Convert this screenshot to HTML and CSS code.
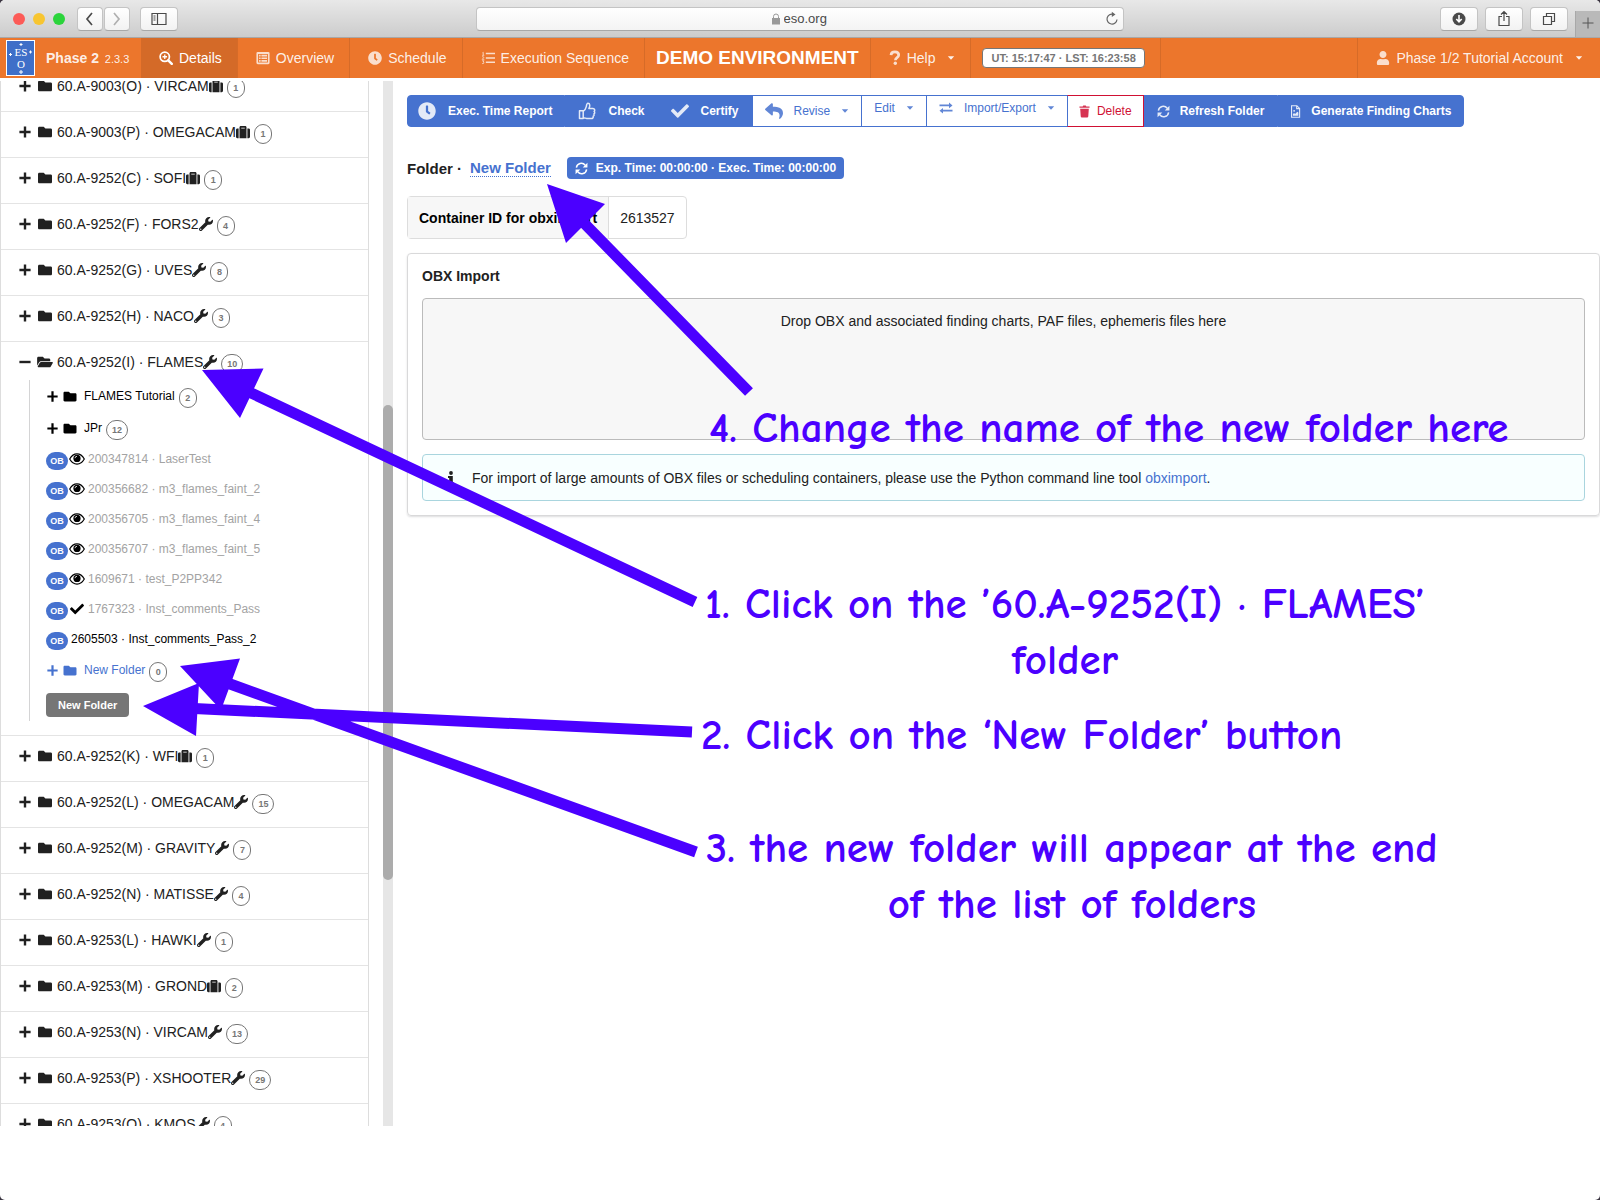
FILE: index.html
```html
<!DOCTYPE html>
<html lang="en">
<head>
    <meta charset="UTF-8">
    <meta name="viewport" content="width=device-width, initial-scale=1.0">
    <title>Phase 2</title>
    <link rel="stylesheet" href="styles.css">
</head>
<body>

    <!-- Icon set -->
    <svg class="sprite" aria-hidden="true">
        <symbol id="plus" viewBox="0 0 12 12"><path d="M4.8 0.4h2.4v4.4h4.4v2.4H7.2v4.4H4.8V7.2H0.4V4.8h4.4z"/></symbol>
        <symbol id="minus" viewBox="0 0 12 12"><path d="M0.4 4.8h11.2v2.4H0.4z"/></symbol>
        <symbol id="folder" viewBox="0 0 512 512"><path d="M464 128H272l-64-64H48C21.49 64 0 85.49 0 112v288c0 26.51 21.49 48 48 48h416c26.51 0 48-21.49 48-48V176c0-26.51-21.49-48-48-48z"/></symbol>
        <symbol id="folder-open" viewBox="0 0 576 512"><path d="M572.694 292.093L500.27 416.248A63.997 63.997 0 0 1 444.989 448H45.025c-18.523 0-30.064-20.093-20.731-36.093l72.424-124.155A64 64 0 0 1 152 256h399.964c18.523 0 30.064 20.093 20.73 36.093zM152 224h328v-48c0-26.51-21.49-48-48-48H272l-64-64H48C21.49 64 0 85.49 0 112v278.046l69.077-118.418C86.214 242.25 117.989 224 152 224z"/></symbol>
        <symbol id="wrench" viewBox="0 0 512 512"><path d="M507.73 109.1c-2.24-9.03-13.54-12.09-20.12-5.51l-74.36 74.36-67.88-11.31-11.31-67.88 74.36-74.36c6.62-6.62 3.43-17.9-5.66-20.16-47.38-11.74-99.55.91-136.58 37.93-39.64 39.64-50.55 97.1-34.05 147.2L18.74 402.76c-24.99 24.99-24.99 65.51 0 90.5 24.99 24.99 65.51 24.99 90.5 0l213.21-213.21c50.12 16.71 107.47 5.68 147.37-34.22 37.07-37.07 49.7-89.32 37.91-136.73zM64 472c-13.25 0-24-10.75-24-24 0-13.26 10.75-24 24-24s24 10.74 24 24c0 13.25-10.75 24-24 24z"/></symbol>
        <symbol id="suitcase" viewBox="0 0 512 512"><path d="M128 480h256V80c0-26.5-21.5-48-48-48H176c-26.5 0-48 21.5-48 48v400zm64-384h128v32H192V96zm320 80v256c0 26.5-21.5 48-48 48h-48V128h48c26.5 0 48 21.5 48 48zM96 480H48c-26.5 0-48-21.5-48-48V176c0-26.5 21.5-48 48-48h48v352z"/></symbol>
        <symbol id="check" viewBox="0 0 512 512"><path d="M173.898 439.404l-166.4-166.4c-9.997-9.997-9.997-26.206 0-36.204l36.203-36.204c9.997-9.998 26.207-9.998 36.204 0L192 312.69 432.095 72.596c9.997-9.997 26.207-9.997 36.204 0l36.203 36.204c9.997 9.997 9.997 26.206 0 36.204l-294.4 294.401c-9.998 9.997-26.207 9.997-36.204-.001z"/></symbol>
        <symbol id="clock" viewBox="0 0 512 512"><path d="M256,8C119,8,8,119,8,256S119,504,256,504,504,393,504,256,393,8,256,8Zm92.49,313h0l-20,25a16,16,0,0,1-22.49,2.5h0l-67-49.72a40,40,0,0,1-15-31.23V112a16,16,0,0,1,16-16h32a16,16,0,0,1,16,16V256l58,42.5A16,16,0,0,1,348.49,321Z"/></symbol>
        <symbol id="user" viewBox="0 0 448 512"><path d="M224 256c70.7 0 128-57.3 128-128S294.7 0 224 0 96 57.3 96 128s57.3 128 128 128zm89.6 32h-16.7c-22.2 10.2-46.9 16-72.9 16s-50.6-5.8-72.9-16h-16.7C60.2 288 0 348.2 0 422.4V464c0 26.5 21.5 48 48 48h352c26.5 0 48-21.5 48-48v-41.6c0-74.2-60.2-134.4-134.4-134.4z"/></symbol>
        <symbol id="reply" viewBox="0 0 512 512"><path d="M8.309 189.836L184.313 37.851C199.719 24.546 224 35.347 224 56.015v80.053c160.629 1.839 288 34.032 288 186.258 0 61.441-39.581 122.309-83.333 154.132-13.653 9.931-33.111-2.533-28.077-18.631 45.344-145.012-21.507-183.51-176.59-185.742V360c0 20.7-24.3 31.453-39.687 18.164l-176.004-152c-11.071-9.562-11.086-26.753 0-36.328z"/></symbol>
        <symbol id="caret" viewBox="0 0 8 8"><path d="M0.8 2.2h6.4L4 5.8z"/></symbol>
        <symbol id="eye" viewBox="0 0 16 14"><path d="M0.7 7C2.7 3.4 5.2 1.9 8 1.9S13.3 3.4 15.3 7C13.3 10.6 10.8 12.1 8 12.1S2.7 10.6 0.7 7z" fill="none" stroke="currentColor" stroke-width="1.2"/><circle cx="8" cy="6.4" r="3.6"/><path d="M6 6.2A2 2 0 0 1 8 4.3" fill="none" stroke="#fff" stroke-width="0.8"/></symbol>
        <symbol id="zoom-in" viewBox="0 0 16 16"><g fill="none" stroke="currentColor"><circle cx="6.6" cy="6.6" r="5.3" stroke-width="2"/><path d="M10.6 10.6l4 4" stroke-width="2.8" stroke-linecap="round"/><path d="M6.6 4v5.2M4 6.6h5.2" stroke-width="1.5"/></g></symbol>
        <symbol id="list-alt" viewBox="0 0 16 16"><path fill-rule="evenodd" d="M2 1h12a1.5 1.5 0 0 1 1.5 1.5v11A1.5 1.5 0 0 1 14 15H2a1.5 1.5 0 0 1-1.5-1.5v-11A1.5 1.5 0 0 1 2 1zM2.4 3.4v9.8h11.2V3.4z"/><path d="M3.5 4.4h1.8v1.8H3.5zM6.2 4.4h6.4v1.8H6.2zM3.5 7.4h1.8v1.8H3.5zM6.2 7.4h6.4v1.8H6.2zM3.5 10.4h1.8v1.8H3.5zM6.2 10.4h6.4v1.8H6.2z"/></symbol>
        <symbol id="list-ol" viewBox="0 0 16 16"><path d="M5.5 2H16v1.8H5.5zM5.5 7H16v1.8H5.5zM5.5 12H16v1.8H5.5z"/><path d="M1.6 2.2l1-0.7v3.3M1.2 4.9h2.6M1.2 6.7c1.7-0.9 2.7 0.5 1.3 1.6L1.3 9.5h2.5M1.2 11.2h2.3l-1.2 1.4c1.9 0.2 1.5 2.3-1.2 1.7" fill="none" stroke="currentColor" stroke-width="0.9"/></symbol>
        <symbol id="help" viewBox="0 0 12 16"><path d="M2 5.2C2.3 0.8 9.7 1 9.7 5.1c0 2.7-3.3 2.5-3.3 5.1" fill="none" stroke="currentColor" stroke-width="2.7"/><circle cx="6.3" cy="13.3" r="1.7"/></symbol>
        <symbol id="thumb" viewBox="0 0 18 18"><path d="M1.5 8.7h3.7v7.9H1.5zM5.2 9.3c1.9-1 2.6-2.6 3.1-4.7 0.3-1.8 0.5-3.3 1.6-3.3 2.4 0 2.2 2.8 1 5.3h4c2 0 2.3 1.9 1.2 2.7 0.9 1 0.7 2.2-0.2 2.7 0.5 1 0.2 1.9-0.7 2.3 0.2 1.4-0.4 2.3-2 2.3H9.8c-1.8 0-3-0.9-4.6-0.9" fill="none" stroke="currentColor" stroke-width="1.5" stroke-linejoin="round"/></symbol>
        <symbol id="exchange" viewBox="0 0 14 12"><path d="M0.5 2.6H10V0.5l3.5 2.9L10 6.2V4.2H0.5zM13.5 9.4H4v2L0.5 8.7 4 5.9v1.9h9.5z"/></symbol>
        <symbol id="trash" viewBox="0 0 12 14"><path d="M0.5 1.5H4l0.7-1h2.6l0.7 1h3.5V3h-11zM1.3 4h9.4l-0.6 8.5a1.2 1.2 0 0 1-1.2 1H3.1a1.2 1.2 0 0 1-1.2-1z"/></symbol>
        <symbol id="refresh" viewBox="0 0 14 14"><path d="M1.5 6.1A5.3 5.3 0 0 1 11 3.5M12.5 7.9A5.3 5.3 0 0 1 3 10.5" fill="none" stroke="currentColor" stroke-width="1.6"/><path d="M13.4 0.7v5.1H8.3zM0.6 13.3V8.2h5.1z"/></symbol>
        <symbol id="file-image" viewBox="0 0 12 14"><path d="M1.7 0.7h5.8l3 3v9.6H1.7zM7.3 0.8v3.1h3.1" fill="none" stroke="currentColor" stroke-width="1.2"/><path d="M3.2 11.5V9.8l1.3-1.2 1 1L8 7.2l1.1 1v3.3z"/><circle cx="4.5" cy="6.3" r="1"/></symbol>
        <symbol id="info" viewBox="0 0 8 16"><path d="M1 6h4.8v6.4H7v2H1v-2h1.2V8H1z"/><circle cx="4" cy="3" r="1.9"/></symbol>
        <symbol id="lock" viewBox="0 0 10 12"><path d="M1 5h8v6.5H1z"/><path d="M2.5 5V3.5a2.5 2.5 0 0 1 5 0V5" fill="none" stroke="currentColor"/></symbol>
    </svg>

    <div class="window">

        <!-- Browser bar -->
        <header class="browser">
            <div class="chrome-left">
                <div class="lights">
                    <span class="light red"></span>
                    <span class="light yellow"></span>
                    <span class="light green"></span>
                </div>
                <div class="history">
                    <button class="chrome-btn small" aria-label="Back"><svg width="14" height="16" viewBox="0 0 14 16"><path d="M9 2L4 8l5 6" fill="none" stroke="#4a4a4a" stroke-width="1.7"/></svg></button>
                    <button class="chrome-btn small" aria-label="Forward"><svg width="14" height="16" viewBox="0 0 14 16"><path d="M4 2l5 6-5 6" fill="none" stroke="#b0b0b0" stroke-width="1.7"/></svg></button>
                </div>
                <button class="chrome-btn" aria-label="Show sidebar"><svg width="16" height="14" viewBox="0 0 16 14"><path d="M1 1.5h14v11H1zM6.5 1.5v11M2.5 4h2M2.5 6h2M2.5 8h2" fill="none" stroke="#4a4a4a" stroke-width="1.2"/></svg></button>
            </div>
            <div class="address">
                <svg class="lock" width="10" height="12"><use href="#lock"/></svg>
                <input class="url" type="text" value="eso.org" aria-label="Address">
                <button class="reload" aria-label="Reload"><svg width="14" height="16" viewBox="0 0 14 16"><path d="M8.5 3.3A5 5 0 1 0 12 8.5" fill="none" stroke="#666" stroke-width="1.2"/><path d="M6.8 0.7l3.7 2.7-3.7 2.5z" fill="#666"/></svg></button>
            </div>
            <div class="chrome-right">
                <button class="chrome-btn" aria-label="Downloads"><svg width="14" height="14" viewBox="0 0 14 14"><circle cx="7" cy="7" r="6.5" fill="#4a4a4a"/><path d="M7 3v6.5M4.3 7L7 9.8 9.7 7" fill="none" stroke="#fff" stroke-width="1.6"/></svg></button>
                <button class="chrome-btn" aria-label="Share"><svg width="14" height="18" viewBox="0 0 14 18"><path d="M5 6.5H2v9h10v-9H9M7 11V2M4 4.5L7 1.5l3 3" fill="none" stroke="#4a4a4a" stroke-width="1.2"/></svg></button>
                <button class="chrome-btn" aria-label="Show tabs"><svg width="14" height="14" viewBox="0 0 14 14"><path d="M1.5 4.5h8v8h-8zM4.5 4V1.5h8v8H10" fill="none" stroke="#4a4a4a" stroke-width="1.2"/></svg></button>
                <button class="new-tab" aria-label="New tab"><svg width="12" height="12" viewBox="0 0 12 12"><path d="M6 0.5v11M0.5 6h11" fill="none" stroke="#555"/></svg></button>
            </div>
        </header>

        <!-- Menu -->
        <nav class="menu">
            <a class="brand" href="#">
                <svg class="logo" width="29" height="36" viewBox="0 0 29 36">
                    <rect x="0.5" y="0.5" width="28" height="35" fill="#3f6fc8" stroke="#fff"/>
                    <g fill="#fff" font-family="Liberation Serif, serif" font-size="11" text-anchor="middle">
                        <text x="15" y="16">ES</text>
                        <text x="15" y="28">O</text>
                    </g>
                    <path d="M15 3v3M13.5 4.5h3M4.5 13v3M3 14.5h3M24.5 10.5v3M23 12h3M15 30v4M13 32h4" stroke="#fff" fill="none"/>
                </svg>
                <span><b>Phase 2</b> <small>2.3.3</small></span>
            </a>
            <a class="item active" href="#"><svg class="icon" width="14" height="14"><use href="#zoom-in"/></svg>Details</a>
            <a class="item" href="#"><svg class="icon" width="14" height="14"><use href="#list-alt"/></svg>Overview</a>
            <a class="item" href="#"><svg class="icon" width="14" height="14"><use href="#clock"/></svg>Schedule</a>
            <a class="item" href="#"><svg class="icon" width="14" height="14"><use href="#list-ol"/></svg>Execution Sequence</a>
            <div class="item demo">DEMO ENVIRONMENT</div>
            <a class="item" href="#"><svg class="icon" width="12" height="16"><use href="#help"/></svg>Help<svg class="caret" width="8" height="8"><use href="#caret"/></svg></a>
            <div class="item times"><span class="time-label">UT: 15:17:47 · LST: 16:23:58</span></div>
            <a class="item account" href="#"><svg class="icon" width="14" height="14"><use href="#user"/></svg>Phase 1/2 Tutorial Account<svg class="caret" width="8" height="8"><use href="#caret"/></svg></a>
        </nav>

        <div class="content">

            <!-- Runs -->
            <aside class="sidebar">
                <ul class="runs">
                    <li class="run"><button class="toggle" aria-label="Expand"><svg width="12" height="12"><use href="#plus"/></svg></button><a href="#"><svg class="folder" width="14" height="14"><use href="#folder"/></svg>60.A-9003(O) · VIRCAM<svg width="14" height="14"><use href="#suitcase"/></svg></a><span class="count">1</span></li>
                    <li class="run"><button class="toggle" aria-label="Expand"><svg width="12" height="12"><use href="#plus"/></svg></button><a href="#"><svg class="folder" width="14" height="14"><use href="#folder"/></svg>60.A-9003(P) · OMEGACAM<svg width="14" height="14"><use href="#suitcase"/></svg></a><span class="count">1</span></li>
                    <li class="run"><button class="toggle" aria-label="Expand"><svg width="12" height="12"><use href="#plus"/></svg></button><a href="#"><svg class="folder" width="14" height="14"><use href="#folder"/></svg>60.A-9252(C) · SOFI<svg width="14" height="14"><use href="#suitcase"/></svg></a><span class="count">1</span></li>
                    <li class="run"><button class="toggle" aria-label="Expand"><svg width="12" height="12"><use href="#plus"/></svg></button><a href="#"><svg class="folder" width="14" height="14"><use href="#folder"/></svg>60.A-9252(F) · FORS2<svg width="14" height="14"><use href="#wrench"/></svg></a><span class="count">4</span></li>
                    <li class="run"><button class="toggle" aria-label="Expand"><svg width="12" height="12"><use href="#plus"/></svg></button><a href="#"><svg class="folder" width="14" height="14"><use href="#folder"/></svg>60.A-9252(G) · UVES<svg width="14" height="14"><use href="#wrench"/></svg></a><span class="count">8</span></li>
                    <li class="run"><button class="toggle" aria-label="Expand"><svg width="12" height="12"><use href="#plus"/></svg></button><a href="#"><svg class="folder" width="14" height="14"><use href="#folder"/></svg>60.A-9252(H) · NACO<svg width="14" height="14"><use href="#wrench"/></svg></a><span class="count">3</span></li>
                    <li class="open-run">
                        <div class="run"><button class="toggle" aria-label="Collapse"><svg width="12" height="12"><use href="#minus"/></svg></button><a href="#"><svg class="folder" width="16" height="14"><use href="#folder-open"/></svg>60.A-9252(I) · FLAMES<svg width="14" height="14"><use href="#wrench"/></svg></a><span class="count">10</span></div>
                        <ul class="children">
                            <li class="sub"><button class="toggle" aria-label="Expand"><svg width="11" height="11"><use href="#plus"/></svg></button><a href="#"><svg class="folder" width="13" height="13"><use href="#folder"/></svg>FLAMES Tutorial</a><span class="count">2</span></li>
                            <li class="sub"><button class="toggle" aria-label="Expand"><svg width="11" height="11"><use href="#plus"/></svg></button><a href="#"><svg class="folder" width="13" height="13"><use href="#folder"/></svg>JPr</a><span class="count">12</span></li>
                            <li class="ob"><span class="pill">OB</span><svg width="16" height="14"><use href="#eye"/></svg><a class="muted" href="#">200347814 · LaserTest</a></li>
                            <li class="ob"><span class="pill">OB</span><svg width="16" height="14"><use href="#eye"/></svg><a class="muted" href="#">200356682 · m3_flames_faint_2</a></li>
                            <li class="ob"><span class="pill">OB</span><svg width="16" height="14"><use href="#eye"/></svg><a class="muted" href="#">200356705 · m3_flames_faint_4</a></li>
                            <li class="ob"><span class="pill">OB</span><svg width="16" height="14"><use href="#eye"/></svg><a class="muted" href="#">200356707 · m3_flames_faint_5</a></li>
                            <li class="ob"><span class="pill">OB</span><svg width="16" height="14"><use href="#eye"/></svg><a class="muted" href="#">1609671 · test_P2PP342</a></li>
                            <li class="ob"><span class="pill">OB</span><svg width="16" height="14"><use href="#check"/></svg><a class="muted" href="#">1767323 · Inst_comments_Pass</a></li>
                            <li class="ob"><span class="pill">OB</span><a href="#">2605503 · Inst_comments_Pass_2</a></li>
                            <li class="sub selected"><button class="toggle" aria-label="Expand"><svg width="11" height="11"><use href="#plus"/></svg></button><a href="#"><svg class="folder" width="13" height="13"><use href="#folder"/></svg>New Folder</a><span class="count">0</span></li>
                            <li><button class="new-folder">New Folder</button></li>
                        </ul>
                    </li>
                    <li class="run"><button class="toggle" aria-label="Expand"><svg width="12" height="12"><use href="#plus"/></svg></button><a href="#"><svg class="folder" width="14" height="14"><use href="#folder"/></svg>60.A-9252(K) · WFI<svg width="14" height="14"><use href="#suitcase"/></svg></a><span class="count">1</span></li>
                    <li class="run"><button class="toggle" aria-label="Expand"><svg width="12" height="12"><use href="#plus"/></svg></button><a href="#"><svg class="folder" width="14" height="14"><use href="#folder"/></svg>60.A-9252(L) · OMEGACAM<svg width="14" height="14"><use href="#wrench"/></svg></a><span class="count">15</span></li>
                    <li class="run"><button class="toggle" aria-label="Expand"><svg width="12" height="12"><use href="#plus"/></svg></button><a href="#"><svg class="folder" width="14" height="14"><use href="#folder"/></svg>60.A-9252(M) · GRAVITY<svg width="14" height="14"><use href="#wrench"/></svg></a><span class="count">7</span></li>
                    <li class="run"><button class="toggle" aria-label="Expand"><svg width="12" height="12"><use href="#plus"/></svg></button><a href="#"><svg class="folder" width="14" height="14"><use href="#folder"/></svg>60.A-9252(N) · MATISSE<svg width="14" height="14"><use href="#wrench"/></svg></a><span class="count">4</span></li>
                    <li class="run"><button class="toggle" aria-label="Expand"><svg width="12" height="12"><use href="#plus"/></svg></button><a href="#"><svg class="folder" width="14" height="14"><use href="#folder"/></svg>60.A-9253(L) · HAWKI<svg width="14" height="14"><use href="#wrench"/></svg></a><span class="count">1</span></li>
                    <li class="run"><button class="toggle" aria-label="Expand"><svg width="12" height="12"><use href="#plus"/></svg></button><a href="#"><svg class="folder" width="14" height="14"><use href="#folder"/></svg>60.A-9253(M) · GROND<svg width="14" height="14"><use href="#suitcase"/></svg></a><span class="count">2</span></li>
                    <li class="run"><button class="toggle" aria-label="Expand"><svg width="12" height="12"><use href="#plus"/></svg></button><a href="#"><svg class="folder" width="14" height="14"><use href="#folder"/></svg>60.A-9253(N) · VIRCAM<svg width="14" height="14"><use href="#wrench"/></svg></a><span class="count">13</span></li>
                    <li class="run"><button class="toggle" aria-label="Expand"><svg width="12" height="12"><use href="#plus"/></svg></button><a href="#"><svg class="folder" width="14" height="14"><use href="#folder"/></svg>60.A-9253(P) · XSHOOTER<svg width="14" height="14"><use href="#wrench"/></svg></a><span class="count">29</span></li>
                    <li class="run"><button class="toggle" aria-label="Expand"><svg width="12" height="12"><use href="#plus"/></svg></button><a href="#"><svg class="folder" width="14" height="14"><use href="#folder"/></svg>60.A-9253(Q) · KMOS<svg width="14" height="14"><use href="#wrench"/></svg></a><span class="count">4</span></li>
                </ul>
            </aside>
            <div class="scrollbar"><div class="thumb"></div></div>

            <!-- Folder details -->
            <main class="details">
                <div class="toolbar">
                    <button class="tool"><svg width="18" height="18"><use href="#clock"/></svg>Exec. Time Report</button>
                    <button class="tool"><svg width="18" height="18"><use href="#thumb"/></svg>Check</button>
                    <button class="tool"><svg width="18" height="18"><use href="#check"/></svg>Certify</button>
                    <button class="tool basic"><svg width="18" height="18"><use href="#reply"/></svg>Revise<svg width="8" height="8"><use href="#caret"/></svg></button>
                    <button class="tool basic raised">Edit<svg width="8" height="8"><use href="#caret"/></svg></button>
                    <button class="tool basic raised"><svg width="14" height="12"><use href="#exchange"/></svg>Import/Export<svg width="8" height="8"><use href="#caret"/></svg></button>
                    <button class="tool delete"><svg width="11" height="13"><use href="#trash"/></svg>Delete</button>
                    <button class="tool compact"><svg width="13" height="13"><use href="#refresh"/></svg>Refresh Folder</button>
                    <button class="tool compact"><svg width="11" height="13"><use href="#file-image"/></svg>Generate Finding Charts</button>
                </div>

                <div class="title">
                    <span>Folder ·</span>
                    <a class="folder-name" href="#">New Folder</a>
                    <button class="exec"><svg width="13" height="13"><use href="#refresh"/></svg>Exp. Time: 00:00:00 · Exec. Time: 00:00:00</button>
                </div>

                <table class="container-id">
                    <tr>
                        <th>Container ID for obximport</th>
                        <td>2613527</td>
                    </tr>
                </table>

                <section class="segment">
                    <h4>OBX Import</h4>
                    <div class="drop">Drop OBX and associated finding charts, PAF files, ephemeris files here</div>
                    <div class="message">
                        <svg width="8" height="16"><use href="#info"/></svg>
                        <p>For import of large amounts of OBX files or scheduling containers, please use the Python command line tool <a href="#">obximport</a>.</p>
                    </div>
                </section>
            </main>
        </div>

        <!-- Tutorial notes over the page -->
        <div class="notes">
            <svg class="arrows" width="800" height="900" viewBox="0 0 800 900">
                <path d="M248 391.5L695 602M194 708.5L692 732M226 682.5L696 852M582 221L749 392"/>
                <path class="head" d="M202 370l61.5-1.5L240 418zM143 706l56-23-3 53zM180 666l60-7.5L221 710zM547 184l58 20-39 39z"/>
            </svg>
            <p class="note note-name">4. Change the name of the new folder here</p>
            <p class="note note-run">1. Click on the ’60.A-9252(I) · FLAMES’<br>folder</p>
            <p class="note note-button">2. Click on the ‘New Folder’ button</p>
            <p class="note note-result">3. the new folder will appear at the end<br>of the list of folders</p>
        </div>
    </div>

</body>
</html>
```
FILE: styles.css
```css
* {
    box-sizing: border-box;
}
body {
    margin: 0;
    background-color: #3a3440;
    font-family: "Helvetica Neue", "Liberation Sans", Arial, sans-serif;
    font-size: 14px;
    color: #212121;
}
button {
    font-family: inherit;
    cursor: pointer;
}
a {
    color: inherit;
    text-decoration: none;
}
svg {
    fill: currentColor;
    flex-shrink: 0;
}
ul {
    list-style: none;
    margin: 0;
    padding: 0;
}
.sprite {
    display: none;
}
.window {
    position: relative;
    display: flex;
    flex-direction: column;
    height: 100vh;
    overflow: hidden;
    background-color: white;
    border-radius: 5px;
}

/* Browser bar */
.browser {
    display: grid;
    grid-template-columns: 1fr 648px 1fr;
    align-items: center;
    height: 38px;
    background: linear-gradient(#e8e8e8, #cccccc);
    border-bottom: 1px solid #a8a8a8;
}
.chrome-left {
    display: flex;
    align-items: center;
    padding-left: 13px;
}
.lights {
    display: flex;
    gap: 8px;
    margin-right: 12px;
}
.light {
    width: 12px;
    height: 12px;
    border-radius: 50%;
}
.red {
    background-color: #fc5b57;
}
.yellow {
    background-color: #f7c530;
}
.green {
    background-color: #2bd43b;
}
.history {
    display: flex;
    gap: 1px;
    margin-right: 10px;
}
.chrome-btn {
    display: flex;
    align-items: center;
    justify-content: center;
    width: 38px;
    height: 24px;
    padding: 0;
    background: linear-gradient(#ffffff, #f2f2f2);
    border: 1px solid #c4c4c4;
    border-bottom-color: #a8a8a8;
    border-radius: 4px;
}
.small {
    width: 26px;
}
.address {
    display: flex;
    align-items: center;
    justify-content: center;
    position: relative;
    height: 24px;
    background: linear-gradient(#ffffff, #f4f4f4);
    border: 1px solid #c4c4c4;
    border-bottom-color: #a8a8a8;
    border-radius: 4px;
}
.lock {
    color: #999;
    margin-right: 3px;
}
.url {
    width: 46px;
    padding: 0;
    border: none;
    background: none;
    font-family: inherit;
    font-size: 13px;
    color: #4a4a4a;
}
.reload {
    position: absolute;
    right: 4px;
    display: flex;
    padding: 0;
    border: none;
    background: none;
}
.chrome-right {
    display: flex;
    align-items: center;
    justify-content: flex-end;
    gap: 7px;
    height: 37px;
}
.new-tab {
    align-self: flex-end;
    width: 25px;
    height: 26px;
    padding: 0;
    background-color: #b9b9b9;
    border: none;
    border-left: 1px solid #a8a8a8;
}

/* Menu */
.menu {
    display: flex;
    height: 40px;
    background-color: #ec762c;
    color: rgba(255, 255, 255, 0.9);
}
.brand {
    display: flex;
    align-items: center;
    gap: 11px;
    width: 141px;
    padding-left: 6px;
}
.brand small {
    margin-left: 2px;
    font-size: 11px;
}
.item {
    display: flex;
    align-items: center;
    padding: 0 15px 0 18px;
    border-right: 1px solid #d66b28;
}
.icon {
    margin-right: 6px;
    opacity: 0.85;
}
.active {
    background-color: #d46a28;
    color: white;
}
.active .icon {
    opacity: 1;
}
.caret {
    margin-left: 12px;
}
.demo {
    padding: 0 11px;
    font-size: 19px;
    font-weight: bold;
    color: white;
}
.times {
    padding: 0 15px 0 11px;
}
.time-label {
    padding: 3px 8px;
    background-color: white;
    border: 1px solid #767676;
    border-radius: 4px;
    font-size: 11px;
    font-weight: bold;
    color: #767676;
}
.account {
    margin-left: auto;
    padding-right: 17px;
    border-left: 1px solid #d66b28;
    border-right: none;
}

/* Sidebar */
.content {
    display: flex;
    flex: 1;
    min-height: 0;
    margin: 3px 0 74px;
}
.sidebar {
    width: 369px;
    overflow: hidden;
    border-left: 1px solid #ddd;
    border-right: 1px solid #ddd;
}
/* list is scrolled part of a row down */
.runs {
    margin-top: -15px;
}
.runs > li {
    border-bottom: 1px solid #e4e4e4;
}
.run {
    display: flex;
    align-items: center;
    height: 46px;
    padding: 0 18px 6px;
}
.run a, .sub a {
    display: flex;
    align-items: center;
}
.toggle {
    display: flex;
    justify-content: center;
    width: 12px;
    padding: 0;
    border: none;
    background: none;
    color: inherit;
}
.folder {
    width: 16px;
    margin: 0 4px 0 6px;
}
.count {
    min-width: 18px;
    height: 20px;
    margin: 4px 0 0 4px;
    padding: 0 5px;
    border: 1px solid #767676;
    border-radius: 10px;
    font-size: 9px;
    line-height: 19px;
    font-weight: bold;
    text-align: center;
    color: #767676;
}
.children {
    margin: -8px 0 14px 28px;
    padding: 0 0 4px 16px;
    border-left: 1px solid #d4d4d5;
    font-size: 12px;
    color: black;
}
.sub {
    display: flex;
    align-items: center;
    height: 32px;
}
.sub .folder {
    margin: 0 6px 0 4px;
}
.selected > .toggle, .selected > a {
    color: #4672cf;
}
.ob {
    display: flex;
    align-items: center;
    gap: 1px;
    height: 30px;
}
.ob a {
    margin-left: 2px;
}
.pill {
    width: 22px;
    height: 18px;
    margin-top: 3px;
    border-radius: 9px;
    background-color: #4672cf;
    font-size: 9px;
    line-height: 19px;
    font-weight: bold;
    text-align: center;
    color: white;
}
.muted {
    color: #a3a3a3;
}
.new-folder {
    display: block;
    height: 24px;
    margin: 7px 0 0;
    padding: 0 12px;
    border: none;
    border-radius: 4px;
    background-color: #767676;
    font-size: 11px;
    font-weight: bold;
    color: white;
}
.scrollbar {
    width: 10px;
    margin-left: 14px;
    background-color: #e6e6e6;
}
.thumb {
    height: 475px;
    margin-top: 324px;
    border-radius: 5px;
    background-color: #acacac;
}

/* Folder details */
.details {
    flex: 1;
    padding: 14px 0 0 14px;
}
.toolbar {
    display: flex;
    height: 32px;
}
.tool {
    display: flex;
    align-items: center;
    gap: 12px;
    padding: 0 12px;
    border: 1px solid #4672cf;
    background-color: #4672cf;
    font-size: 12px;
    font-weight: bold;
    color: white;
    white-space: nowrap;
}
.tool svg {
    opacity: 0.85;
}
.tool:first-child {
    padding-left: 10px;
    border-radius: 4px 0 0 4px;
}
.tool:last-child {
    border-radius: 0 4px 4px 0;
}
.basic {
    gap: 11px;
    background-color: white;
    font-weight: normal;
    color: #4672cf;
    border-right-width: 0;
}
.raised {
    padding-bottom: 6px;
}
.compact {
    gap: 10px;
}
.delete {
    gap: 7px;
    padding: 0 11px;
    background-color: white;
    border-color: #d01134;
    border-left-color: #4672cf;
    font-weight: normal;
    color: #d01134;
}
.title {
    display: flex;
    align-items: center;
    gap: 8px;
    margin-top: 30px;
    font-size: 15px;
    font-weight: bold;
}
.folder-name {
    border-bottom: 1px dotted #4672cf;
    color: #4672cf;
}
.exec {
    display: flex;
    align-items: center;
    gap: 8px;
    height: 22px;
    margin-left: 8px;
    padding: 0 8px;
    border: none;
    border-radius: 4px;
    background-color: #4672cf;
    font-size: 12px;
    font-weight: bold;
    color: white;
}
.container-id {
    margin: 17px 0 14px;
    border: 1px solid #ddd;
    border-spacing: 0;
    border-radius: 4px;
}
.container-id th, .container-id td {
    height: 41px;
    padding: 0 11px;
}
.container-id th {
    background-color: #f7f7f7;
    border-right: 1px solid #ddd;
    color: black;
}
.segment {
    padding: 14px;
    border: 1px solid #d9d9da;
    border-radius: 4px;
    box-shadow: 0 1px 2px rgba(34, 36, 38, 0.15);
}
.segment h4 {
    margin: 0 0 14px;
    font-size: 14px;
    line-height: 16px;
}
.drop {
    height: 142px;
    margin-bottom: 14px;
    padding-top: 14px;
    border: 1px solid #bbb;
    border-radius: 4px;
    background-color: #f7f7f7;
    text-align: center;
}
.message {
    display: flex;
    align-items: center;
    gap: 17px;
    height: 47px;
    padding-left: 24px;
    border: 1px solid #a9d5de;
    border-radius: 4px;
    background-color: #f8ffff;
}
.message a {
    color: #4672cf;
}

/* Tutorial notes */
.notes {
    position: absolute;
    inset: 0;
    pointer-events: none;
}
.arrows {
    fill: none;
    stroke: #4b00ff;
    stroke-width: 11;
}
.head {
    fill: #4b00ff;
    stroke: none;
}
.note {
    position: absolute;
    margin: 0;
    font-family: "Comic Sans MS", "Comic Neue", "Open Sans", sans-serif;
    font-size: 43px;
    font-weight: bold;
    line-height: 56px;
    text-align: center;
    white-space: nowrap;
    color: #4b00ff;
}
.note-name {
    left: 709px;
    top: 400px;
}
.note-run {
    left: 705px;
    top: 576px;
}
.note-button {
    left: 701px;
    top: 707px;
}
.note-result {
    left: 706px;
    top: 820px;
}
```
